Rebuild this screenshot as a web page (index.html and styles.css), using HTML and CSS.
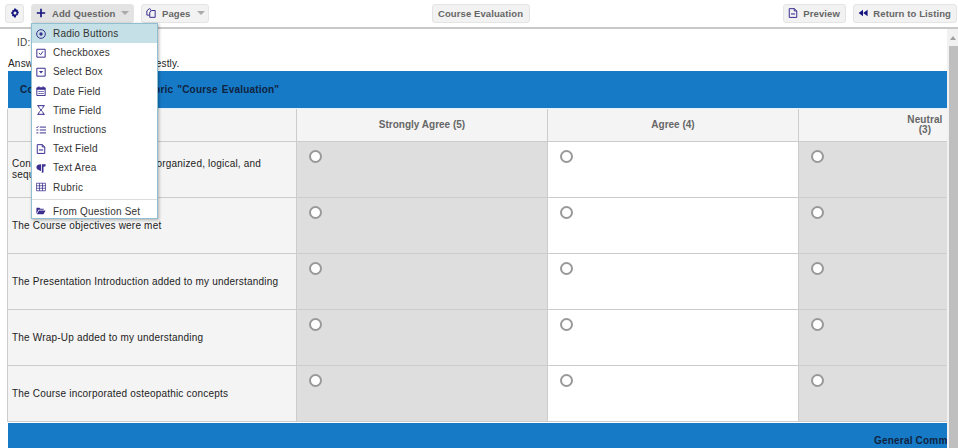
FILE: index.html
```html
<!DOCTYPE html>
<html lang="en">
  <head>
    <meta charset="UTF-8" />
    <meta name="viewport" content="width=device-width, initial-scale=1.0" />
    <title>Course Evaluation</title>
    <link rel="stylesheet" href="styles.css">
  </head>
  <body>
    <div class="toolbar">
      <div class="tool-group">
        <button class="tool-btn gear-btn">
          <svg class="icon dark" viewBox="0 0 12 12"><path fill-rule="evenodd" d="M5 .5h2l.3 1.500 1-.5 1.400 1.400-.6 1.100 1.400.4v2l-1.400.4.6 1.100-1.400 1.400-1-.5L7 11.500H5l-.3-1.700-1 .5-1.400-1.400.6-1.100L1.500 7V5l1.400-.4-.6-1.100 1.400-1.400 1 .5zM6 4.200a1.800 1.800 0 1 0 0 3.600 1.800 1.800 0 0 0 0-3.600z"/></svg>
        </button>
        <button class="tool-btn add-btn">
          <svg class="icon dark" viewBox="0 0 12 12"><path d="M5 1h2v4h4v2H7v4H5V7H1V5h4z"/></svg>
          Add Question <span class="caret"></span>
        </button>
        <button class="tool-btn pages-btn">
          <svg class="icon" viewBox="0 0 12 12"><path class="line" d="M5.500 3V1.500L4 .8 1 3.500v5h3.500M4.500 5 7 3h4v8.200H4.500z"/></svg>
          Pages <span class="caret"></span>
        </button>
      </div>
      <div class="tool-group center-group">
        <button class="tool-btn course-btn">Course Evaluation</button>
      </div>
      <div class="tool-group">
        <button class="tool-btn preview-btn">
          <svg class="icon" viewBox="0 0 12 12"><path class="line" d="M1.500.8h6L10.500 3.500v7.800h-9zM7.500.8v2.700h3"/><path d="M3.500 6.500h5v1.300h-5z"/></svg>
          Preview
        </button>
        <button class="tool-btn">
          <svg class="icon dark" viewBox="0 0 12 12"><path d="M6 2v8L.8 6zM11.500 2v8L6.300 6z"/></svg>
          Return to Listing
        </button>
      </div>
    </div>

    <div class="add-menu">
      <div class="menu-item active">
        <svg class="icon" viewBox="0 0 12 12"><circle class="line" cx="6" cy="6" r="5.200"/><circle cx="6" cy="6" r="2"/></svg>
        Radio Buttons
      </div>
      <div class="menu-item">
        <svg class="icon" viewBox="0 0 12 12"><path class="line" d="M1 1.500h10v9.500H1zM3.500 6l2 2 3-4"/></svg>
        Checkboxes
      </div>
      <div class="menu-item">
        <svg class="icon" viewBox="0 0 12 12"><path class="line" d="M1 1.500h10v9.500H1z"/><path d="M3.500 4.800h5L6 7.800z"/></svg>
        Select Box
      </div>
      <div class="menu-item">
        <svg class="icon" viewBox="0 0 12 12"><path class="line" d="M1 2.200h10v9.300H1zM3.500.3v2.500M8.500.3v2.500"/><path d="M1 2.200h10v2.200H1zM3 6h1.500v1.300H3zM5.300 6h1.500v1.300H5.300zM7.600 6h1.500v1.300H7.600zM3 8.300h1.500v1.300H3zM5.300 8.300h1.500v1.300H5.300zM7.600 8.300h1.500v1.300H7.600z"/></svg>
        Date Field
      </div>
      <div class="menu-item">
        <svg class="icon" viewBox="0 0 12 12"><path class="line" d="M1.500.8h9M1.500 11.200h9M3 .8c0 3.200 2.500 3.800 3 5.200.5-1.400 3-2 3-5.200M3 11.200c0-3.200 2.500-3.800 3-5.200.5 1.400 3 2 3 5.200"/></svg>
        Time Field
      </div>
      <div class="menu-item">
        <svg class="icon" viewBox="0 0 12 12"><path class="line" d="M4.500 2.500h7.500M4.500 6h7.500M4.500 9.500h7.500M.5 2.500l.8.8 1.500-1.800M.5 6h2.300M.5 9.500h2.300"/></svg>
        Instructions
      </div>
      <div class="menu-item">
        <svg class="icon" viewBox="0 0 12 12"><path class="line" d="M1.500.8h6L10.500 3.500v7.800h-9zM7.500.8v2.700h3"/><path d="M3.500 6.500h5v1.300h-5z"/></svg>
        Text Field
      </div>
      <div class="menu-item">
        <svg class="icon" viewBox="0 0 12 12"><path d="M11.500 1.500V4L9 4.500V11l-2 1V1.500zM6 1.500V9.500C2.500 9 .5 7.500.5 5.200S2.500 1.500 6 1.500z"/></svg>
        Text Area
      </div>
      <div class="menu-item">
        <svg class="icon" viewBox="0 0 12 12"><path class="line thin" d="M.5 1.500h11v9H.5zM.5 4.500h11M.5 7.500h11M4.200 1.500v9M7.800 1.500v9"/></svg>
        Rubric
      </div>
      <div class="menu-divider"></div>
      <div class="menu-item">
        <svg class="icon" viewBox="0 0 12 12"><path d="M.5 2h3.700l1 1.200h4v1.300H3L.5 9.500zM3.500 5.300h8L9 10H1z"/></svg>
        From Question Set
      </div>
    </div>

    <div class="workspace">
      <div class="content">
        <p class="form-id">ID: 1042</p>
        <p class="intro">Answer all of the questions honestly.</p>
        <table class="rubric">
          <colgroup>
            <col class="col-question">
            <col class="col-choice">
            <col class="col-choice">
            <col class="col-last">
          </colgroup>
          <tr>
            <td class="band title-band" colspan="4">Complete the following Rubric "Course Evaluation"</td>
          </tr>
          <tr>
            <th></th>
            <th>Strongly Agree (5)</th>
            <th>Agree (4)</th>
            <th class="neutral-head"><span>Neutral<br>(3)</span></th>
          </tr>
          <tr>
            <td class="question">Content of the conference was organized, logical, and sequential</td>
            <td class="choice shaded"><span class="radio"></span></td>
            <td class="choice"><span class="radio"></span></td>
            <td class="choice shaded"><span class="radio"></span></td>
          </tr>
          <tr>
            <td class="question">The Course objectives were met</td>
            <td class="choice shaded"><span class="radio"></span></td>
            <td class="choice"><span class="radio"></span></td>
            <td class="choice shaded"><span class="radio"></span></td>
          </tr>
          <tr>
            <td class="question">The Presentation Introduction added to my understanding</td>
            <td class="choice shaded"><span class="radio"></span></td>
            <td class="choice"><span class="radio"></span></td>
            <td class="choice shaded"><span class="radio"></span></td>
          </tr>
          <tr>
            <td class="question">The Wrap-Up added to my understanding</td>
            <td class="choice shaded"><span class="radio"></span></td>
            <td class="choice"><span class="radio"></span></td>
            <td class="choice shaded"><span class="radio"></span></td>
          </tr>
          <tr>
            <td class="question">The Course incorporated osteopathic concepts</td>
            <td class="choice shaded"><span class="radio"></span></td>
            <td class="choice"><span class="radio"></span></td>
            <td class="choice shaded"><span class="radio"></span></td>
          </tr>
        </table>
        <div class="band comments-band">General Comm</div>
      </div>
      <div class="scrollbar">
        <div class="scroll-up"></div>
        <div class="scroll-thumb"></div>
      </div>
    </div>
  </body>
</html>
```

FILE: styles.css
```css
* {
  box-sizing: border-box;
}
html,
body {
  height: 100%;
}
body {
  margin: 0;
  overflow: hidden;
  font-family: "Liberation Sans", Arial, sans-serif;
  font-size: 10px;
  letter-spacing: 0.2px;
  color: #222;
  background: #fff;
}
.toolbar {
  height: 29px;
  padding: 4px 1px 0 5px;
  display: flex;
  justify-content: space-between;
  border-bottom: 2px solid #c8c8c8;
}
.tool-group {
  display: flex;
  gap: 7px;
  height: 19px;
}
.center-group {
  position: absolute;
  left: 432px;
}
.tool-btn {
  height: 19px;
  padding: 0 5px 1px 4px;
  display: flex;
  align-items: center;
  gap: 5px;
  font-family: inherit;
  font-size: 9.5px;
  font-weight: bold;
  letter-spacing: 0.1px;
  white-space: nowrap;
  color: #666;
  background: #f2f2f2;
  border: 1px solid #e4e4e4;
  border-radius: 3px;
}
.gear-btn {
  width: 19px;
  padding: 0 0 1px;
  justify-content: center;
}
.add-btn {
  width: 103px;
  gap: 6px;
  background: #e3e3e3;
}
.pages-btn {
  width: 68px;
  gap: 6px;
}
.course-btn {
  width: 98px;
  justify-content: center;
}
.preview-btn {
  width: 63px;
}
.icon {
  width: 10px;
  height: 10px;
  flex: none;
  fill: #3a2f8f;
}
.icon.dark {
  fill: #14147f;
}
.icon .line {
  fill: none;
  stroke: #3a2f8f;
  stroke-width: 1.2;
}
.icon .thin {
  stroke-width: 0.9;
}
.caret {
  width: 0;
  height: 0;
  border-left: 4px solid transparent;
  border-right: 4px solid transparent;
  border-top: 4px solid #aaa;
}
.add-menu {
  position: absolute;
  left: 31px;
  top: 23px;
  width: 127px;
  height: 196px;
  background: #fff;
  border: 1px solid #8fbfd0;
  box-shadow: 1px 1px 3px rgba(0, 0, 0, 0.3);
  z-index: 5;
}
.menu-item {
  height: 19.2px;
  padding-left: 4px;
  display: flex;
  align-items: center;
  gap: 7px;
  color: #333;
}
.menu-item.active {
  background: #c5e0e6;
}
.menu-divider {
  height: 1px;
  margin-top: 2px;
  margin-bottom: 2px;
  background: #ddd;
}
.workspace {
  height: 419px;
  display: flex;
}
.content {
  flex: 1;
  min-width: 0;
  overflow: hidden;
  padding: 0 0 0 8px;
}
.form-id {
  margin: 0;
  padding: 8px 0 0 9px;
  height: 27px;
  color: #444;
}
.intro {
  margin: 0;
  height: 15px;
  line-height: 15px;
  word-spacing: 0.5px;
}
.rubric {
  width: 940px;
  margin-left: -1px;
  table-layout: fixed;
  border-collapse: collapse;
}
.col-question {
  width: 289px;
}
.col-choice {
  width: 251px;
}
.col-last {
  width: 149px;
}
.band {
  background: #167ac6;
  color: #10233f;
  font-size: 10px;
  font-weight: bold;
  letter-spacing: 0.2px;
}
.title-band {
  height: 37px;
  padding: 0 0 0 12px;
  word-spacing: 1px;
  border-left: 1px solid #fff;
  border-bottom: 1px solid #e8f1f6;
}
.rubric th {
  height: 33px;
  padding: 0;
  background: #f4f4f4;
  border: 1px solid #ccc;
  font-size: 10px;
  letter-spacing: 0;
  color: #666;
}
.rubric th.neutral-head {
  padding-right: 5px;
  text-align: right;
  border-right: none;
}
.neutral-head span {
  display: inline-block;
  line-height: 10px;
  letter-spacing: 0.1px;
  text-align: center;
}
.question {
  height: 56px;
  padding: 0 4px;
  background: #f4f4f4;
  border: 1px solid #ccc;
  line-height: 11px;
}
.choice {
  padding: 8px 0 0 12px;
  vertical-align: top;
  border: 1px solid #ccc;
}
.choice.shaded {
  background: #dedede;
}
.radio {
  display: block;
  width: 13px;
  height: 13px;
  background: #fff;
  border: 2px solid #999;
  border-radius: 50%;
}
.comments-band {
  width: 939px;
  height: 30px;
  margin-top: 1px;
  padding: 12px 0 0 866px;
  white-space: nowrap;
  overflow: hidden;
}
.scrollbar {
  width: 11px;
  flex: none;
  padding-left: 2px;
  background: #f1f1f1;
}
.scroll-up {
  height: 17px;
  position: relative;
}
.scroll-up::after {
  content: "";
  position: absolute;
  left: 1px;
  top: 7px;
  border-left: 3px solid transparent;
  border-right: 3px solid transparent;
  border-bottom: 4px solid #a0a0a0;
}
.scroll-thumb {
  height: 402px;
  background: #bfbfbf;
}
```
